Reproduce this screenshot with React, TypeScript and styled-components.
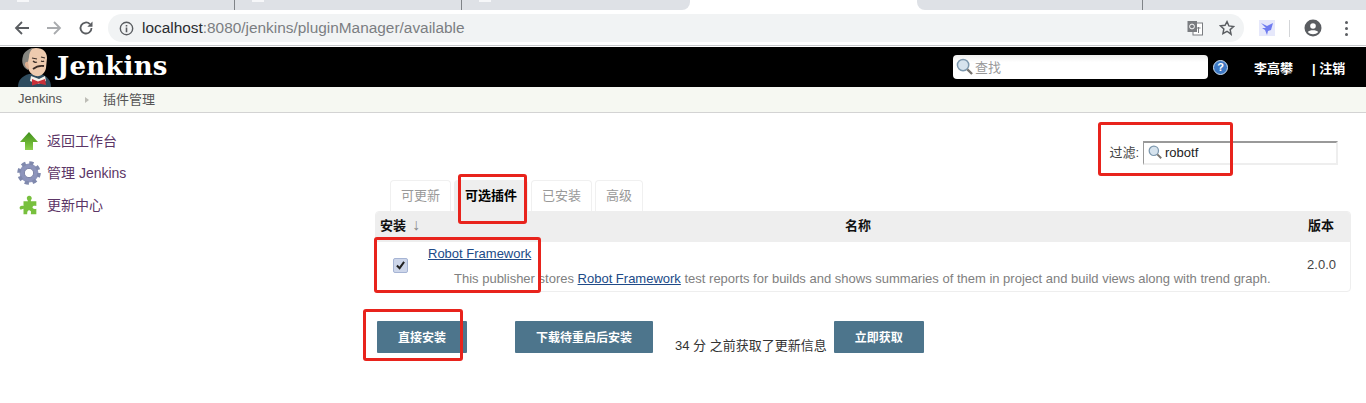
import React from "react";
import styled, { createGlobalStyle } from "styled-components";

const cjk = `"Liberation Sans", "Noto Sans CJK SC", sans-serif`;

const GlobalStyle = createGlobalStyle`
  html, body {
    margin: 0;
    padding: 0;
    background: #fff;
    font-family: ${cjk};
    overflow: hidden;
  }
`;

function JenkinsLogo() {
  return (
    <svg width="36" height="41" viewBox="0 0 36 41">
      <path d="M0 41c0-7 4-11 11-13l12 0c6 2 10 6 10 13z" fill="#2f4c5e" />
      <path d="M13 30l8 3 6-3 1 5-8 3-8-3z" fill="#f4f1ea" />
      <path d="M7 12C7 5 12 2 18 2c7 0 11 4 11 10l-1 10c-1 5-5 9-10 8-4-1-7-4-8-8z" fill="#eecbaf" />
      <path d="M10 24C5 22 3 16 5 10c1-4 5-7 10-8-3 3-4 6-4 9l-1 5z" fill="#85857f" />
      <path d="M10 16c-3-1-4 3-2 5 1 2 3 2 3 1z" fill="#dcae90" />
      <path d="M14 12l5 1M23 11l4 1" stroke="#3a2e28" strokeWidth="1.1" fill="none" />
      <path d="M15 15q2 2 4 1M23 15q2 1 3 0" stroke="#3a2e28" strokeWidth="1.2" fill="none" />
      <path d="M15 23q5-4 11-3" stroke="#3a2c26" strokeWidth="1.8" fill="none" />
      <path d="M14 33l6 2.500 7-2.500 1 6-7-1.500-7 2z" fill="#c92f38" />
    </svg>
  );
}

function SearchGlass({ size }: { size: number }) {
  return (
    <svg width={size} height={size} viewBox="0 0 18 18">
      <circle cx="7.5" cy="7.5" r="6" fill="#d6e3ee" stroke="#7d98ae" strokeWidth="1.6" />
      <path d="M12 12l5 5" stroke="#77736e" strokeWidth="2.4" />
    </svg>
  );
}

const menu = [
  {
    label: "返回工作台",
    icon: (
      <svg width="20" height="20" viewBox="0 0 20 20">
        <defs>
          <linearGradient id="upArrow" x1="0" y1="0" x2="0" y2="1">
            <stop offset="0" stopColor="#3f8f1d" />
            <stop offset="0.6" stopColor="#6cb533" />
            <stop offset="1" stopColor="#8ed04e" />
          </linearGradient>
        </defs>
        <path d="M10 1l9 10h-5v8H6v-8H1z" fill="url(#upArrow)" />
      </svg>
    ),
  },
  {
    label: "管理 Jenkins",
    icon: (
      <svg width="24" height="24" viewBox="0 0 24 24">
        <circle cx="12" cy="12" r="6.8" fill="none" stroke="#8d94bb" strokeWidth="5.4" />
        <circle cx="12" cy="12" r="10" fill="none" stroke="#8089ad" strokeWidth="3.6" strokeDasharray="4.2 3.65" />
        <circle cx="12" cy="12" r="4.6" fill="#fff" stroke="#6d7499" strokeWidth="0.8" />
      </svg>
    ),
  },
  {
    label: "更新中心",
    icon: (
      <svg width="22" height="24" viewBox="0 0 24 24">
        <path
          d="M10 6c-2-4 5-6 5-1 0 1-1 1-1 3h6v5c-2 0-3-1-4 1s2 3 4 2v6h-6c0-2 1-3-1-4s-3 1-3 4H6v-6c-2 0-3 2-4 0s1-4 4-3V8h5c0-1-1-1-1-2z"
          fill="#78c03e"
        />
      </svg>
    ),
  },
];

export default function App() {
  return (
    <Page>
      <GlobalStyle />
      <TabStrip>
        <TabSlot $width={235} $divider>
          <TabStub />
        </TabSlot>
        <TabSlot $width={227} $divider>
          <TabStub />
        </TabSlot>
        <TabSlot $width={228} $corner="right">
          <TabStub />
        </TabSlot>
        <ActiveTab />
        <TabSlot $width={226} $divider $corner="left" />
        <TabTail />
      </TabStrip>
      <Toolbar>
        <NavIcon>
          <svg width="16" height="16" viewBox="0 0 16 16">
            <path d="M15 8H2M8 2L2 8l6 6" fill="none" stroke="#5a5d61" strokeWidth="1.8" />
          </svg>
        </NavIcon>
        <NavIcon>
          <svg width="16" height="16" viewBox="0 0 16 16">
            <path d="M1 8h13M8 2l6 6-6 6" fill="none" stroke="#a9abae" strokeWidth="1.8" />
          </svg>
        </NavIcon>
        <NavIcon>
          <svg width="16" height="16" viewBox="0 0 16 16">
            <path d="M13.5 8a5.5 5.5 0 1 1-1.6-3.9" fill="none" stroke="#5a5d61" strokeWidth="1.8" />
            <path d="M14.5 1.5v5.2H9.3z" fill="#5a5d61" />
          </svg>
        </NavIcon>
        <Omnibox>
          <svg width="15" height="15" viewBox="0 0 16 16">
            <circle cx="8" cy="8" r="6.6" fill="none" stroke="#5a5d61" strokeWidth="1.5" />
            <path d="M8 7v5M8 4.2v1.6" stroke="#5a5d61" strokeWidth="1.7" />
          </svg>
          <Url>
            <UrlHost>localhost</UrlHost>:8080/jenkins/pluginManager/available
          </Url>
          <OmniActions>
            <svg width="16" height="16" viewBox="0 0 16 16">
              <rect x="6" y="3" width="9.5" height="12" fill="#fff" stroke="#7a7c80" />
              <rect x="0.5" y="1" width="9.5" height="11" fill="#7a7c80" />
              <circle cx="5" cy="6.5" r="2.4" fill="none" stroke="#fff" />
              <path d="M9.5 8h4M11.5 7v6" stroke="#7a7c80" />
            </svg>
            <svg width="16" height="16" viewBox="0 0 24 24">
              <path
                d="M12 2.500l2.900 6.400 7 .8-5.200 4.700 1.400 6.900L12 16.900l-6.100 3.400 1.400-6.900-5.200-4.700 7-.8z"
                fill="none"
                stroke="#5a5d61"
                strokeWidth="2.200"
              />
            </svg>
          </OmniActions>
        </Omnibox>
        <Extensions>
          <svg width="16" height="16" viewBox="0 0 16 16">
            <rect width="16" height="16" fill="#e6e8fb" />
            <path d="M2 3l6 3 6-3-2 7-3 1-1 4-2-5-3-2 4 0z" fill="#6f7cf0" />
          </svg>
          <ToolbarDivider />
          <svg width="18" height="18" viewBox="0 0 18 18">
            <circle cx="9" cy="9" r="8.500" fill="#5a5d61" />
            <circle cx="9" cy="7" r="2.800" fill="#fff" />
            <path d="M3.800 13c1.500-2.400 8.900-2.400 10.400 0-2.600 3-7.800 3-10.400 0z" fill="#fff" />
          </svg>
          <KebabMenu>
            <i />
            <i />
            <i />
          </KebabMenu>
        </Extensions>
      </Toolbar>
      <Header>
        <Brand>
          <JenkinsLogo />
          <Wordmark>Jenkins</Wordmark>
        </Brand>
        <SearchBox>
          <SearchGlass size={17} />
          <SearchHint>查找</SearchHint>
        </SearchBox>
        <HelpDot>?</HelpDot>
        <UserName>李高攀</UserName>
        <Logout>| 注销</Logout>
      </Header>
      <Breadcrumbs>
        <Crumb>Jenkins</Crumb>
        <CrumbArrow />
        <Crumb>插件管理</Crumb>
      </Breadcrumbs>
      <Main>
        <SidePanel>
          {menu.map((item) => (
            <SideItem key={item.label}>
              <SideIcon>{item.icon}</SideIcon>
              <SideLabel>{item.label}</SideLabel>
            </SideItem>
          ))}
        </SidePanel>
        <Content>
          <FilterRow>
            <FilterLabel>过滤:</FilterLabel>
            <FilterBox>
              <SearchGlass size={14} />
              <FilterValue>robotf</FilterValue>
            </FilterBox>
          </FilterRow>
          <Tabs>
            <Tab>可更新</Tab>
            <Tab $active>可选插件</Tab>
            <Tab>已安装</Tab>
            <Tab>高级</Tab>
          </Tabs>
          <Table>
            <TableHead>
              <InstallHead>
                安装<SortArrow>↓</SortArrow>
              </InstallHead>
              <NameHead>名称</NameHead>
              <VersionHead>版本</VersionHead>
            </TableHead>
            <TableRow>
              <CheckCell>
                <CheckBox>
                  <svg width="9" height="9" viewBox="0 0 10 10">
                    <path d="M1 5l3 3 5-7" fill="none" stroke="#222" strokeWidth="2.200" />
                  </svg>
                </CheckBox>
              </CheckCell>
              <PluginCell>
                <PluginLink>Robot Framework</PluginLink>
                <PluginInfo>
                  This publisher stores <PluginLink>Robot Framework</PluginLink> test reports for builds and shows
                  summaries of them in project and build views along with trend graph.
                </PluginInfo>
              </PluginCell>
              <VersionCell>2.0.0</VersionCell>
            </TableRow>
          </Table>
          <Actions>
            <ActionButton $width={90}>直接安装</ActionButton>
            <ActionButton $width={138} $gap={48}>
              下载待重启后安装
            </ActionButton>
            <UpdateNote>34 分 之前获取了更新信息</UpdateNote>
            <ActionButton $width={90}>立即获取</ActionButton>
          </Actions>
        </Content>
      </Main>
      <Highlight $x={1098} $y={122} $w={135} $h={54} />
      <Highlight $x={458} $y={174} $w={69} $h={50} />
      <Highlight $x={374} $y={237} $w={167} $h={56} />
      <Highlight $x={363} $y={309} $w={100} $h={52} />
    </Page>
  );
}

const Page = styled.div`
  position: relative;
  width: 1366px;
  height: 403px;
  overflow: hidden;
  background: #fff;
`;

const TabStrip = styled.div`
  display: flex;
  height: 10px;
  background: #fff;
`;

const TabSlot = styled.div<{ $width: number; $divider?: boolean; $corner?: "left" | "right" }>`
  width: ${(p) => p.$width}px;
  height: 10px;
  box-sizing: border-box;
  background: #dee1e6;
  border-right: ${(p) => (p.$divider ? "1px solid #7f8388" : "none")};
  border-bottom-left-radius: ${(p) => (p.$corner === "left" ? "8px" : "0")};
  border-bottom-right-radius: ${(p) => (p.$corner === "right" ? "8px" : "0")};
`;

const TabStub = styled.span`
  display: block;
  width: 12px;
  height: 2px;
  margin-left: 17px;
  background: #f6f7f9;
`;

const ActiveTab = styled.div`
  width: 227px;
`;

const TabTail = styled.div`
  flex: 1;
  background: #dee1e6;
`;

const Toolbar = styled.div`
  display: flex;
  align-items: center;
  height: 36px;
  box-sizing: border-box;
  padding: 1px 0 0 14px;
  background: #fff;
  border-bottom: 1px solid #c6c8cb;
`;

const NavIcon = styled.span`
  display: flex;
  width: 32px;
  align-items: center;
`;

const Omnibox = styled.div`
  display: flex;
  align-items: center;
  gap: 8px;
  width: 1136px;
  height: 28px;
  margin-left: -2px;
  padding: 0 0 0 11px;
  box-sizing: border-box;
  background: #f1f3f4;
  border-radius: 14px;
`;

const Url = styled.span`
  flex: 1;
  font-size: 15.4px;
  color: #7b7e82;
`;

const UrlHost = styled.span`
  color: #2a2c2f;
`;

const OmniActions = styled.span`
  display: flex;
  align-items: center;
  gap: 16px;
  margin-right: 9px;
`;

const Extensions = styled.div`
  display: flex;
  align-items: center;
  margin-left: 15px;
  gap: 14px;
`;

const ToolbarDivider = styled.span`
  width: 1px;
  height: 17px;
  background: #d3d5d8;
`;

const KebabMenu = styled.span`
  display: flex;
  flex-direction: column;
  gap: 3px;
  margin-left: 9px;
  i {
    display: block;
    width: 3px;
    height: 3px;
    border-radius: 50%;
    background: #5a5d61;
  }
`;

const Header = styled.header`
  display: flex;
  align-items: center;
  height: 40px;
  background: #000;
  padding-left: 18px;
  margin-top: 1px;
  box-sizing: border-box;
  color: #fff;
`;

const Brand = styled.div`
  display: flex;
  align-items: flex-end;
  height: 40px;
  gap: 3px;
  width: 935px;
`;

const Wordmark = styled.span`
  font-family: "DejaVu Serif", serif;
  font-weight: bold;
  font-size: 26px;
  line-height: 38px;
  letter-spacing: 0.2px;
  align-self: flex-start;
`;

const SearchBox = styled.div`
  display: flex;
  align-items: center;
  gap: 2px;
  width: 255px;
  height: 24px;
  padding-left: 3px;
  box-sizing: border-box;
  margin-bottom: 1px;
  background: linear-gradient(#eee, #fff 30%);
  border-radius: 4px;
`;

const SearchHint = styled.span`
  font-size: 13px;
  color: #999;
`;

const HelpDot = styled.span`
  width: 15px;
  height: 15px;
  margin-left: 5px;
  border-radius: 50%;
  border: 1px solid #cfe2f5;
  box-sizing: border-box;
  background: #3d78c4;
  color: #fff;
  font-size: 11px;
  font-weight: bold;
  line-height: 13px;
  text-align: center;
`;

const UserName = styled.span`
  margin-left: 26px;
  font-size: 13px;
  font-weight: bold;
`;

const Logout = styled.span`
  margin-left: 19px;
  font-size: 13px;
  font-weight: bold;
`;

const Breadcrumbs = styled.nav`
  display: flex;
  align-items: center;
  height: 26px;
  box-sizing: border-box;
  padding: 0 0 2px 18px;
  background: #f6f8f2;
  border-bottom: 1px solid #d3d3d3;
`;

const Crumb = styled.span`
  font-size: 13px;
  color: #555;
`;

const CrumbArrow = styled.span`
  width: 0;
  height: 0;
  margin: 2px 14px 0 23px;
  border-left: 4px solid #bdbdb6;
  border-top: 3.5px solid transparent;
  border-bottom: 3.5px solid transparent;
`;

const Main = styled.main`
  display: flex;
`;

const SidePanel = styled.aside`
  display: flex;
  flex-direction: column;
  gap: 8px;
  width: 375px;
  flex: none;
  padding: 16px 0 0 16px;
  box-sizing: border-box;
`;

const SideItem = styled.div`
  display: flex;
  align-items: center;
  height: 24px;
  font-size: 14px;
  color: #5c3566;
`;

const SideIcon = styled.span`
  display: flex;
  justify-content: center;
  width: 26px;
  margin-right: 5px;
`;

const SideLabel = styled.span`
  padding-bottom: 2px;
`;

const Content = styled.section`
  width: 976px;
  display: flex;
  flex-direction: column;
`;

const FilterRow = styled.div`
  display: flex;
  align-items: center;
  justify-content: flex-end;
  gap: 4px;
  height: 24px;
  margin: 28px 13px 15px 0;
  font-size: 13px;
  color: #444;
`;

const FilterLabel = styled.span`
  padding-bottom: 3px;
`;

const FilterBox = styled.div`
  display: flex;
  align-items: center;
  gap: 3px;
  width: 195px;
  height: 24px;
  box-sizing: border-box;
  padding: 0 0 2px 4px;
  border: 2px solid #eee;
  border-top-color: #999;
  border-left-color: #999;
  border-left-width: 1px;
`;

const FilterValue = styled.span`
  font-size: 13px;
  color: #222;
`;

const Tabs = styled.div`
  display: flex;
  gap: 3px;
  height: 31px;
  padding-left: 15px;
`;

const Tab = styled.div<{ $active?: boolean }>`
  display: flex;
  align-items: center;
  justify-content: center;
  padding: 0 10px 3px;
  background: ${(p) => (p.$active ? "#eeeeee" : "#fff")};
  border: 1px solid ${(p) => (p.$active ? "#eeeeee" : "#f0f0f0")};
  border-bottom: none;
  border-radius: 4px 4px 0 0;
  font-size: 13px;
  font-weight: ${(p) => (p.$active ? "bold" : "normal")};
  color: ${(p) => (p.$active ? "#000" : "#999")};
`;

const Table = styled.div`
  border: 1px solid #eee;
  border-radius: 4px;
  overflow: hidden;
`;

const TableHead = styled.div`
  display: grid;
  grid-template-columns: 199px 566px 1fr;
  align-items: center;
  height: 30px;
  padding-bottom: 5px;
  box-sizing: border-box;
  background: #eee;
  font-size: 13px;
  font-weight: bold;
  color: #111;
`;

const InstallHead = styled.span`
  padding-left: 4px;
`;

const SortArrow = styled.span`
  margin-left: 6px;
  font-size: 16px;
  font-weight: normal;
  color: #888;
`;

const NameHead = styled.span`
  text-align: center;
`;

const VersionHead = styled.span`
  text-align: right;
  padding-right: 16px;
`;

const TableRow = styled.div`
  display: flex;
  height: 49px;
`;

const CheckCell = styled.div`
  display: flex;
  align-items: center;
  justify-content: center;
  width: 49px;
  padding-bottom: 2px;
  box-sizing: border-box;
`;

const CheckBox = styled.span`
  display: flex;
  align-items: center;
  justify-content: center;
  width: 13px;
  height: 13px;
  background: #cdd6ea;
  border: 1px solid #a6b4d4;
  border-radius: 2px;
`;

const PluginCell = styled.div`
  flex: 1;
  padding: 4px 0 0 3px;
  font-size: 13px;
  line-height: 16px;
`;

const PluginLink = styled.a`
  color: #204a87;
  text-decoration: underline;
`;

const PluginInfo = styled.div`
  margin: 9px 0 0 26px;
  color: #808080;
`;

const VersionCell = styled.div`
  width: 60px;
  padding: 15px 14px 0 0;
  box-sizing: border-box;
  text-align: right;
  font-size: 13px;
  color: #444;
`;

const Actions = styled.div`
  display: flex;
  align-items: flex-end;
  margin: 29px 0 0 2px;
`;

const ActionButton = styled.button<{ $width: number; $gap?: number }>`
  width: ${(p) => p.$width}px;
  height: 32px;
  margin-left: ${(p) => p.$gap ?? 0}px;
  padding: 0 0 2px;
  background: #4d758c;
  border: none;
  border-radius: 1px;
  color: #fff;
  font-family: ${cjk};
  font-size: 12px;
  font-weight: bold;
`;

const UpdateNote = styled.span`
  margin: 0 7px -1px 22px;
  font-size: 13px;
  line-height: 16px;
  color: #333;
`;

const Highlight = styled.div<{ $x: number; $y: number; $w: number; $h: number }>`
  position: absolute;
  left: ${(p) => p.$x}px;
  top: ${(p) => p.$y}px;
  width: ${(p) => p.$w}px;
  height: ${(p) => p.$h}px;
  box-sizing: border-box;
  border: 3px solid #e8231c;
  border-radius: 3px;
  pointer-events: none;
`;
